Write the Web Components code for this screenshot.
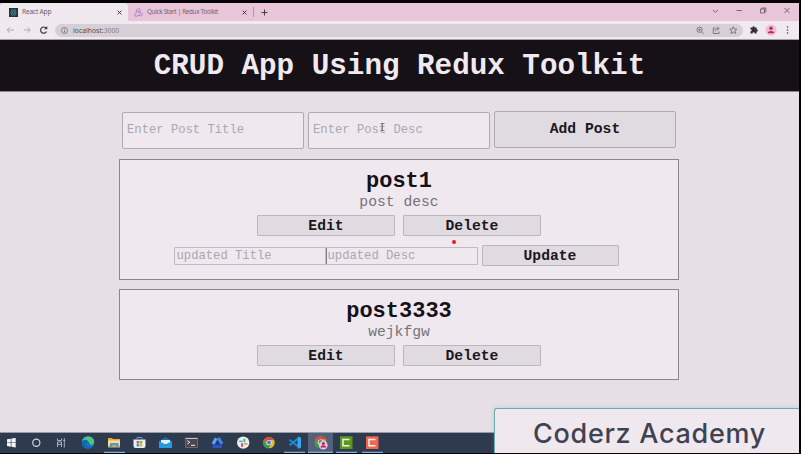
<!DOCTYPE html>
<html lang="en">
<head>
<meta charset="utf-8">
<title>React App</title>
<style>
html,body{margin:0;width:801px;height:454px;overflow:hidden;background:#000}
</style>
</head>
<body>
<desktop-screen></desktop-screen>
<script>
const define = (name, markup) => {
  const t = document.createElement('template');
  t.innerHTML = markup.trim();
  customElements.define(name, class extends HTMLElement {
    constructor(){
      super();
      this.attachShadow({mode:'open'}).append(t.content.cloneNode(true));
    }
  });
};

define('browser-tab', `
<style>
:host{display:flex;align-items:center;box-sizing:border-box;height:18px;font:6.6px/10px "Noto Sans",sans-serif;color:#77646f;white-space:nowrap}
:host([active]){background:#efe9ef;border-radius:4px 4px 0 0;color:#66606a}
.t{flex:1;letter-spacing:var(--ls,0)}
</style>
<slot name="icon"></slot><span class="t"><slot></slot></span>
<svg width="5" height="5" viewBox="0 0 5 5"><path d="M.6 .6L4.4 4.4M4.4 .6L.6 4.4" stroke="#3d333b" stroke-width=".95"/></svg>`);

define('tab-strip', `
<style>
:host{display:flex;height:18px;background:#e9c5da;align-items:center}
.a{width:128px;padding:0 6px 0 9px;--ls:-.2px}
.b{width:125px;padding:0 6px 0 6px;font-size:6.3px;--ls:-.3px}
i{width:1px;height:10px;background:#b996ab}
.sp{flex:1}
svg{display:block;flex:none}
</style>
<browser-tab class="a" active><svg slot="icon" style="margin-right:4px" width="9" height="9" viewBox="0 0 9 9"><rect width="9" height="9" fill="#25313c"/><g fill="none" stroke="#4e91a8" stroke-width=".5"><ellipse cx="4.5" cy="4.5" rx="3.4" ry="1.3"/><ellipse cx="4.5" cy="4.5" rx="3.4" ry="1.3" transform="rotate(60 4.5 4.5)"/><ellipse cx="4.5" cy="4.5" rx="3.4" ry="1.3" transform="rotate(120 4.5 4.5)"/></g></svg>React App</browser-tab>
<browser-tab class="b"><svg slot="icon" style="margin-right:4px" width="9" height="9" viewBox="0 0 9 9"><g fill="none" stroke="#aa78c5" stroke-width=".9"><path d="M2.2 5.2C2 2.2 3.2 .8 4.6.8c1.7 0 2.2 1.6 1.6 2.8M3.3 3.2C5.7 3.3 8.4 5 8.1 6.8 7.7 8.5 5.9 8 5 7M6.1 5.6C4.8 7.9 2.2 8.8 1 7.7.1 6.7 1 5.5 2.4 5"/><circle cx="4.7" cy="4" r=".5"/></g></svg>Quick Start | Redux Toolkit</browser-tab>
<i></i>
<svg style="margin-left:7px" width="7" height="7" viewBox="0 0 7 7"><path d="M3.5 .5V6.5M.5 3.5H6.5" stroke="#4b3c46" stroke-width="1"/></svg>
<span class="sp"></span>
<svg width="90" height="18" viewBox="709 3 90 18" fill="none" stroke="#765d6b" stroke-width=".9"><path d="M713 10l2.5 2.300 2.500-2.300M736.500 10.500h5.500M760.500 9h4v4h-4zM761.800 9v-1h4v4h-1.200M784.500 8l5 5m0-5l-5 5"/></svg>`);

define('address-bar', `
<style>
:host{display:flex;height:19px;align-items:center;background:#f0eaf0}
.pill{flex:none;width:688px;height:13.500px;border-radius:7px;background:#d6d0d6;display:flex;align-items:center;font:6.700px/13px "Noto Sans",sans-serif;color:#858087;white-space:nowrap;letter-spacing:.06px}
.pill b{font-weight:400;color:#4d4850}
.sp{flex:1}
svg{display:block;flex:none}
</style>
<svg width="55" height="19" viewBox="0 21 55 19" fill="none" stroke="#aaa3aa" stroke-width=".95"><path d="M14 30H7.500M10 27.200L7.200 30 10 32.800M24 30h6M27.500 27.200L30.300 30 27.500 32.800"/><path stroke="#3f3941" stroke-width="1.200" d="M46.500 31.500A3.100 3.100 0 1 1 46 28"/><path fill="#3f3941" stroke="none" d="M47.300 26v3.300H44z"/></svg>
<div class="pill"><svg style="margin:0 5px 0 6px" width="7" height="7" viewBox="0 0 7 7" fill="none" stroke="#6d676f" stroke-width=".8"><circle cx="3.500" cy="3.500" r="3"/><path d="M3.500 3v2.300M3.500 1.500v.8"/></svg><span><b>localhost:</b>3000</span><span class="sp"></span>
<svg width="48" height="13" viewBox="695 24 48 13" fill="none" stroke="#756f77" stroke-width=".9"><circle cx="699.600" cy="29.800" r="2.600"/><path d="M701.500 31.700l2.200 2.200M698.300 29.800h2.600M699.600 28.500v2.600M715.500 28h-2.200v5.500h5.800v-2M715 31.200c.3-2 1.600-2.700 3-2.700M717 26.800l2.300 1.800-2.300 1.700"/><path d="M733.300 26.700l1 2.300 2.600.2-2 1.700.7 2.600-2.300-1.400-2.300 1.400.7-2.600-2-1.700 2.600-.2z"/></svg></div>
<svg width="57" height="19" viewBox="743 21 57 19"><path fill="#342d35" d="M750.500 27.500h2.100c-.5-1.800 2.300-1.800 1.900 0h2.100v2c1.800-.4 1.800 2.200 0 1.900v2.100h-2c.3-1.800-2.200-1.800-1.900 0h-2.200v-2.200c1.700.2 1.700-2 0-1.700z"/><circle cx="771" cy="30" r="5.500" fill="#eebed4"/><circle cx="771" cy="28.300" r="1.700" fill="#b4285c"/><path fill="#b4285c" d="M767.800 33.200c0-3 6.400-3 6.400 0z"/><g fill="#48414a"><circle cx="787.500" cy="27" r=".8"/><circle cx="787.500" cy="30" r=".8"/><circle cx="787.500" cy="33" r=".8"/></g></svg>`);

define('page-header', `
<style>
:host{display:block;height:52px;box-sizing:border-box;background:#161117;border-bottom:1px solid #8b868c;color:#f0eaf0;text-align:center;font:bold 29.250px/53px "Liberation Mono","Courier New",monospace;white-space:nowrap}
</style><slot></slot>`);

define('text-field', `
<style>
:host{display:block;box-sizing:border-box;background:#efe9ef;border:1px solid #b0aab1;border-radius:2px;color:#aca6ad;font:12.200px/1 "Liberation Mono","Courier New",monospace;white-space:nowrap}
</style><slot></slot>`);

define('push-button', `
<style>
:host{display:block;box-sizing:border-box;width:138px;height:21px;background:#e0dbe1;border:1px solid #bcb6bd;border-radius:1px;text-align:center;color:#1c171d;font:bold 14.700px/20px "Liberation Mono","Courier New",monospace}
</style><slot></slot>`);

define('post-form', `
<style>
:host{display:flex;gap:4px;justify-content:center}
text-field{width:182px;height:37px;margin-top:1px;padding-left:4px;line-height:35px}
push-button{width:182px;height:37px;line-height:35px;border-color:#b0aab1;border-radius:2px}
</style>
<text-field>Enter Post Title</text-field><text-field>Enter Post Desc</text-field><push-button>Add Post</push-button>`);

define('post-card', `
<style>
:host{display:flex;flex-direction:column;align-items:center;box-sizing:border-box;width:560px;background:#efe9ef;border:1px solid #8b858c;padding-top:9px}
h2{margin:0;font:bold 22px/25px "Liberation Mono","Courier New",monospace;color:#161117}
p{margin:0;font:14.700px/17px "Liberation Mono","Courier New",monospace;color:#77717a}
.row{display:flex;gap:8px;margin-top:4px}
</style>
<h2><slot name="title"></slot></h2><p><slot name="desc"></slot></p>
<div class="row"><push-button>Edit</push-button><push-button>Delete</push-button></div><slot></slot>`);

define('update-form', `
<style>
:host{display:flex;margin:9px 6px 0 0;align-items:flex-start}
text-field{width:152px;height:18px;margin-top:2px;padding-left:2px;line-height:16px;border-color:#c0bac1;border-radius:1px}
text-field+text-field{border-left-color:#817b83;padding-left:1px}
push-button{margin-left:4px;width:137px}
</style>
<text-field>updated Title</text-field><text-field>updated Desc</text-field><push-button>Update</push-button>`);

define('task-bar', `
<style>
:host{display:flex;height:21px;background:#2e3b4f;border-top:1px solid #999aa5;box-sizing:border-box}
svg{display:block}
</style>
<svg width="390" height="20" viewBox="0 433 390 20">
<rect x="308" y="433" width="25" height="20" fill="#53627a"/>
<path d="M104 451.700h21v1.300h-21zM284 451.700h21v1.300h-21zM308 451.700h25v1.300h-25zM336 451.700h21v1.300h-21zM362 451.700h21v1.300h-21z" fill="#78aee2"/>
<path fill="#f5f4f7" d="M7 439.300l3.800-.6v3.700H7zM11.400 438.600l4.300-.6v4.400h-4.300zM7 443h3.800v3.700l-3.800-.6zM11.400 443h4.300v4.400l-4.300-.6z"/>
<circle cx="36.300" cy="442.700" r="3.600" fill="none" stroke="#d3d4da" stroke-width="1.200"/>
<path fill="none" stroke="#a9afbb" d="M57.500 438.500v2h4v-2M57.500 447v-5h4v5M57.500 444.500h4M64.300 438v9.500M63.300 440.500h2"/>
<circle cx="88" cy="442.500" r="6.200" fill="#1683d1"/><path d="M82 441.500c1-7 12.500-6.500 12.200.5-.2 3-3.700 3.800-5.800 2.300 1.500-3.700-3-4.700-6.400-2.800z" fill="#48c77d"/><path d="M82 441.500c2-3 6.500-2 6 1-2.300.6-1.600 4.500 5 4-3 3.200-9.800 2.500-11-3z" fill="#1267bd"/><path d="M88 441.800c-1 2 1 4 5.600 3.200-4 .6-4.500-1-5.600-3.200z" fill="#253a60"/>
<path fill="#e7aa38" d="M108 438h4l1 1h7v8.500h-12z"/><path fill="#ffe08a" d="M108 440.500h12v5h-12z"/><path fill="#4d98d7" d="M110 443h8.500v4.500h-2.300v-2h-4v2H110z"/>
<path fill="#e9eef4" d="M133.500 439.500h12v6.500q0 2-2 2h-8q-2 0-2-2z"/><path d="M137 439.500v-2h5v2" fill="none" stroke="#60a4dd"/><path fill="#e65335" d="M136.600 441h2.600v2.500h-2.600z"/><path fill="#79b747" d="M139.700 441h2.600v2.500h-2.600z"/><path fill="#3497d8" d="M136.600 444h2.600v2.500h-2.600z"/><path fill="#eab739" d="M139.700 444h2.600v2.500h-2.600z"/>
<path fill="#1769b1" d="M159 441l6.500-4 6.500 4v7h-13z"/><path fill="#e9eff5" d="M161 440h9v4h-9z"/><path fill="#249be2" d="M159 441l6.500 3.500L172 441v7h-13z"/>
<path fill="#4b464d" stroke="#938f97" stroke-width=".5" d="M185.500 438h12v9.500h-12z"/><path d="M185.500 438.500h12" stroke="#c7c2c5"/><path d="M187.300 440.500l2.500 1.800-2.500 1.800M191 445.300h4" fill="none" stroke="#fff" stroke-width=".9"/>
<path d="M216.200 438.300L213 444" stroke="#5ba5f6" stroke-width="3.200"/><path d="M218.200 437.800L222 444" stroke="#3d85ee" stroke-width="3.200"/><path d="M212.500 446.500h9.500" stroke="#294fe0" stroke-width="3"/>
<circle cx="243.200" cy="442.600" r="6.200" fill="#f0ebef"/><g stroke-width="1.800" stroke-linecap="round"><path d="M239.800 441.300h2.200" stroke="#48bde2"/><path d="M244.400 439.400v2" stroke="#42b583"/><path d="M244.600 443.900h2.200" stroke="#dfac30"/><path d="M242 444v2.200" stroke="#d33e70"/></g>
<g id="chrome"><circle cx="269" cy="442.600" r="5.700" fill="#e5b92f"/><path fill="#d94b38" d="M264 439.900c2.300-4 8-4 10.100 0H269l-2.300 3.900z"/><path fill="#3d9a52" d="M264 439.900l3 5.200 4.200-.7-2.600 3.900c-5 0-7-5-4.600-8.400z"/><circle cx="269" cy="442.600" r="2.700" fill="#eeeaf0"/><circle cx="269" cy="442.600" r="2" fill="#477fca"/></g>
<path d="M289.500 439.800l9 6.900v-8.400l-9 6.900" fill="none" stroke="#168bd9" stroke-width="2"/><path d="M297.800 436.500l3.200 1.300v9.700l-3.200 1.300z" fill="#37a7ee"/>
<use href="#chrome" x="51.500" y="-.5"/><circle cx="323.300" cy="445.200" r="4.300" fill="#f3c6d7"/><circle cx="323.300" cy="443.600" r="1.500" fill="#ae285c"/><path d="M320.500 447.600c0-3 5.600-3 5.600 0z" fill="#ae285c"/>
<path fill="#5c971d" d="M340 436.300h12.500V449H340z"/><path d="M349.500 439.500H343v6.300h6.500" fill="none" stroke="#f3f4e9" stroke-width="1.500"/>
<path fill="#ee6550" d="M366 436.300h12.500V449H366z"/><path d="M375.500 439.500H369v6.300h6.500" fill="none" stroke="#fff0ed" stroke-width="1.500"/>
</svg>`);

define('brand-banner', `
<style>
:host{display:block;box-sizing:border-box;border:1px solid #65aeb2;border-width:1.500px 0 0 1.500px;border-radius:3px 0 0 0;background:#efe9ef;box-shadow:0 0 5px #8f8a9b55;color:#3f4251;font:500 27px/50px Inter,Lato,sans-serif;padding-left:38px;white-space:nowrap;letter-spacing:.7px}
</style><slot></slot>`);

define('desktop-screen', `
<style>
:host{display:block;position:relative;box-sizing:border-box;width:801px;height:454px;border:solid #050405;border-width:3px 2px 1px 0;background:#e6e0e6;overflow:hidden}
.chrome{height:37px;border-bottom:1px solid #a6a1a9;overflow:hidden;box-sizing:border-box}
main{height:340px;box-sizing:border-box;padding:19px 1px 0 0;display:flex;flex-direction:column;align-items:center}
post-form{margin-bottom:10px}
post-card{height:121px;margin-bottom:9px}
post-card.short{height:91px;margin:0}
brand-banner{position:absolute;left:494px;top:405px;width:305px;height:46px}
.dot{position:absolute;left:452px;top:236.500px;width:4px;height:4px;border-radius:50%;background:#ed1728}
.caret{position:absolute;left:380px;top:120px}
</style>
<div class="chrome"><tab-strip></tab-strip><address-bar></address-bar></div>
<page-header>CRUD App Using Redux Toolkit</page-header>
<main><post-form></post-form>
<post-card><span slot="title">post1</span><span slot="desc">post desc</span><update-form></update-form></post-card>
<post-card class="short"><span slot="title">post3333</span><span slot="desc">wejkfgw</span></post-card>
</main>
<task-bar></task-bar>
<svg class="caret" width="5" height="8" viewBox="0 0 5 8"><path d="M.5.500h4M2.500.500v7M.5 7.500h4" fill="none" stroke="#77717a" stroke-width=".9"/></svg>
<span class="dot"></span>
<brand-banner>Coderz Academy</brand-banner>`);
</script>
</body>
</html>
